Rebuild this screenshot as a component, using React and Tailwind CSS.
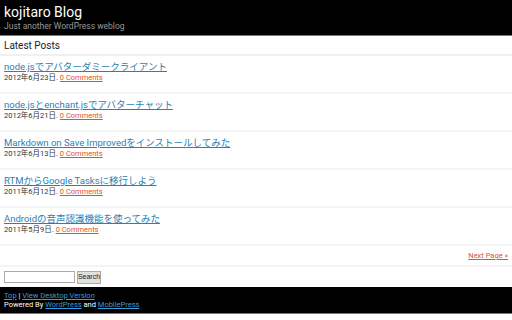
export default function App() {
  const posts = [
    ["node.jsでアバターダミークライアント", "2012年6月23日"],
    ["node.jsとenchant.jsでアバターチャット", "2012年6月21日"],
    ["Markdown on Save Improvedをインストールしてみた", "2012年6月13日"],
    ["RTMからGoogle Tasksに移行しよう", "2011年6月12日"],
    ["Androidの音声認識機能を使ってみた", "2011年5月9日"],
  ];
  const font = { fontFamily: 'Roboto, "Noto Sans CJK JP", sans-serif' };
  return (
    <div className="w-[512px] h-[320px] bg-white overflow-hidden" style={font}>
      <div className="h-[36px] bg-black border-b border-[#777] px-[4px] pt-[3px]">
        <div className="text-white text-[14px] leading-[18px]">kojitaro Blog</div>
        <div className="text-[#999] text-[8.5px] leading-[10px]">Just another WordPress weblog</div>
      </div>
      <div className="h-[20px] border-b-2 border-[#f0f0f0] px-[4px] text-[10px] leading-[19px] text-[#222]">Latest Posts</div>
      {posts.map(([t, d], i) => (
        <div key={i} className="h-[38px] border-b-2 border-[#f4f4f4] px-[4px] pt-[5px]">
          <a className="text-[9.5px] leading-[12px] text-[#2a7fb5] underline block w-fit">{t}</a>
          <div className="text-[7.5px] leading-[9px] text-[#333]">
            {d}. <a className="text-[#d9542b] underline">0 Comments</a>
          </div>
        </div>
      ))}
      <div className="h-[21px] border-b-2 border-[#f4f4f4] px-[4px] flex justify-end items-center">
        <a className="text-[7.5px] text-[#d9542b] underline">Next Page »</a>
      </div>
      <div className="h-[20px] px-[4px] flex items-center gap-[2px]">
        <input className="w-[71px] h-[12px] border border-[#aaa] bg-white" />
        <button className="h-[13px] w-[24px] bg-[#e0e0e0] border border-[#aaa] text-[7px] leading-[10px] text-[#222] flex items-center justify-center" style={{ fontFamily: '"Liberation Sans", Arial, sans-serif' }}>Search</button>
      </div>
      <div className="h-[27px] bg-black border-b border-[#777] px-[4px] pt-[4px] text-white text-[7.5px] leading-[9px]">
        <div><a className="text-[#3d9ad6] underline">Top</a> | <a className="text-[#3d9ad6] underline">View Desktop Version</a></div>
        <div>Powered By <a className="text-[#3d9ad6] underline">WordPress</a> and <a className="text-[#3d9ad6] underline">MobilePress</a></div>
      </div>
    </div>
  );
}
